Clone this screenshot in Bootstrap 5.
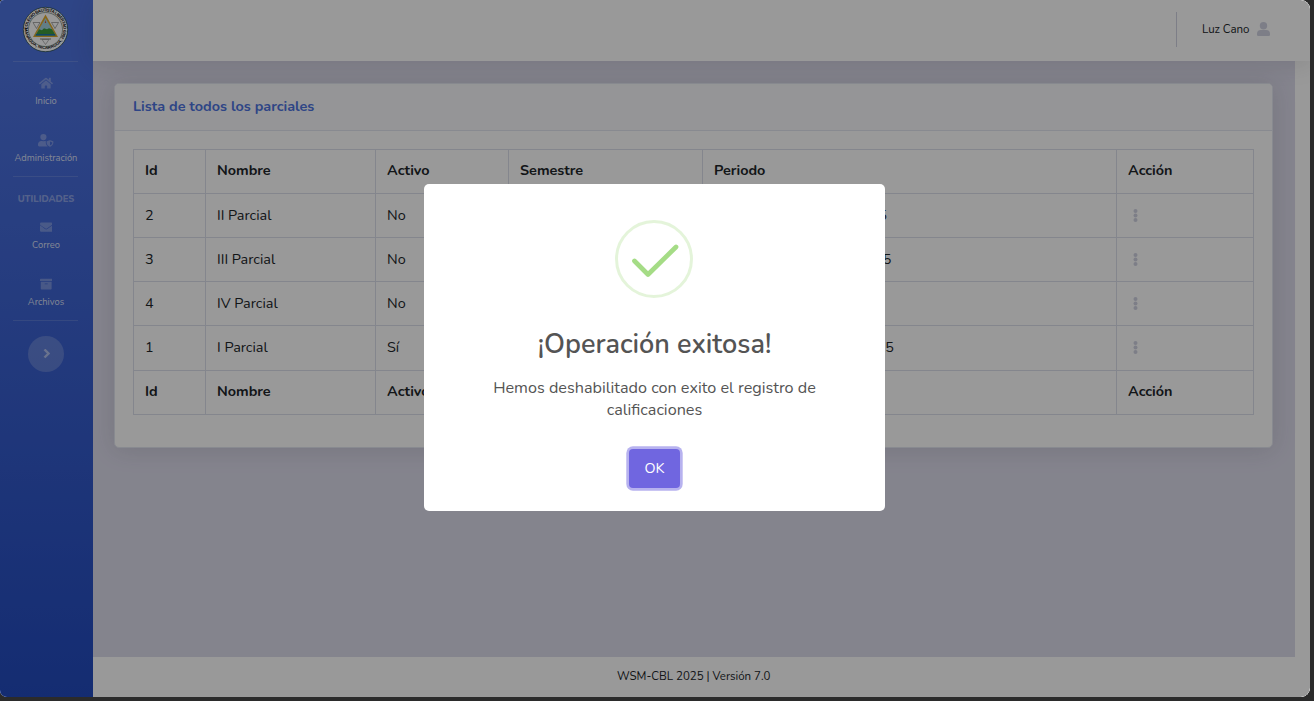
<!DOCTYPE html>
<html lang="es">
<head>
<meta charset="utf-8">
<meta name="viewport" content="width=device-width, initial-scale=1">
<title>Parciales</title>
<link rel="stylesheet" href="https://cdn.jsdelivr.net/npm/bootstrap@5.3.0/dist/css/bootstrap.min.css">
<style>
html{font-size:14.4px}
body{font-family:Nunito,Lato,"Open Sans",sans-serif;font-size:14.4px;background:#2b2b2b;color:#212529;overflow:hidden}
.app-window{width:1310px;height:697px;border-radius:4px 9px 9px 7px;background:#fff}
.side{width:93px;padding-right:2px;background:linear-gradient(180deg,#4e73df 10%,#224abe 100%)}
.side hr{width:65px;margin:0 auto;border:0;border-top:1px solid rgba(255,255,255,.15);opacity:1}
.brand{height:61px;padding-top:6px}
.side-item{height:57.2px;padding:15.3px 0 0 1px;color:rgba(255,255,255,.8);font-size:9.36px;line-height:14px}
.side-item svg{display:block;height:12.4px;fill:rgba(255,255,255,.3);margin:0 auto 4.3px}
.side-title{height:28.6px;padding:15px 0 0 1px;font-size:9.36px;line-height:14px;font-weight:800;color:rgba(255,255,255,.4)}
.toggler{width:36px;height:36px;background:rgba(255,255,255,.2);margin-top:14.5px}
.topbar{height:61px;padding-right:40px;box-shadow:0 2px 25px rgba(58,59,69,.15)}
.topbar .sep{width:1px;height:35px;background:#d1d3e2;margin-top:12px}
.user{font-size:11.5px;line-height:16px;width:93px;padding:21px 0 0 25px}
.user svg{margin-top:1px}
.scroller{width:15px}
.main{background:#dddcec;padding:22px 22px 0 21px}
.panel{border:1px solid #e3e6f0;border-radius:5px;height:365px;box-shadow:0 2px 25px rgba(58,59,69,.15)}
.panel-head{height:47px;background:#f8f9fc;border-bottom:1px solid #e3e6f0;padding:11px 18px;line-height:22px;color:#4e73df;border-radius:4px 4px 0 0}
.panel-body{padding:18px}
.grid-table{table-layout:fixed;width:1121px;border-collapse:collapse;border-color:#dddfeb;line-height:21.6px;margin:0;color:#212529}
.grid-table th,.grid-table td{height:44px;padding:0 11px;vertical-align:middle;border:1px solid #dddfeb}
.grid-table thead th{padding-bottom:1px}
.grid-table tfoot th{padding-bottom:2px}
.grid-table tbody tr:last-child td{height:45px;padding-bottom:1px}
.grid-table svg{display:block;margin-left:5.2px}
.range{display:block;text-align:right;white-space:nowrap}
.foot{height:40px;font-size:11.5px;line-height:38px}
.foot div{width:1201.5px}
.shade{inset:0;background:rgba(0,0,0,.4);border-radius:4px 9px 9px 7px}
.dialog-box{width:461px;height:327px;left:424px;top:184px;border-radius:5px;background:#fff;color:#545454;padding-top:36px}
.tick{display:block;margin-left:191px}
.dialog-box h2{font-size:27px;line-height:32px;font-weight:600;margin:31px 0 16px}
.dialog-box p{font-size:16.2px;line-height:22px;margin:0 0 28px}
.ok{width:51px;height:39px;border:0;border-radius:4px;background:#7066e0;color:#fff;box-shadow:0 0 0 2.7px rgba(112,102,224,.5);font-size:14.4px;line-height:39px;padding:0}
</style>
</head>
<body>
<div class="app-window d-flex position-relative overflow-hidden">
  <aside class="side flex-shrink-0 text-center d-flex flex-column">
    <div class="brand">
      <svg width="47" height="47" viewBox="0 0 47 47">
        <defs><path id="ringTop" d="M5.500 23.500a18 18 0 0 1 36 0"/><path id="ringBottom" d="M2.500 22a21 21 0 0 0 42 0"/></defs>
        <circle cx="23.500" cy="23.500" r="22.200" fill="#fff" stroke="#173c35" stroke-width=".7"/>
        <g font-family="Liberation Sans" font-weight="700" font-size="4.300" fill="#111"><text textLength="56"><textPath href="#ringTop">COLEGIO BAUTISTA LIBERTAD</textPath></text><text textLength="63"><textPath href="#ringBottom">MANAGUA, NICARAGUA, 2000</textPath></text></g>
        <circle cx="23.500" cy="23.500" r="17" fill="#fff" stroke="#2d4a40" stroke-width=".5"/>
        <path d="M11 16.500h7l-3.500 6zM29.500 16.500h7l-3.500 6z" fill="#fff" stroke="#888" stroke-width=".7"/>
        <path d="M23.500 8.500 36 31H11z" fill="#e0a92c"/>
        <path d="M23.500 12 33.700 29.600H13.300z" fill="#a3d3df"/>
        <path d="m15.300 26.300 1.700-3 3 1 2-2 3 1 2-1 3 1 1.800 3 1.900 3.300H13.300z" fill="#3f9a3c"/>
        <path d="M14.300 27.900h18.400l1 1.700H13.300z" fill="#1d75a8"/><path d="M22.800 17h1.400l-.7-3z" fill="#d4493b"/>
        <path d="M20 33.500h7l-3.500 5z" fill="#fff" stroke="#888" stroke-width=".6"/><path d="M18 33h11" stroke="#888"/>
      </svg>
    </div>
    <hr>
    <div class="side-item"><svg viewBox="0 0 576 512"><path d="M280.400 148.300 96 300.100V464a16 16 0 0 0 16 16l112-.3a16 16 0 0 0 16-16V368a16 16 0 0 1 16-16h64a16 16 0 0 1 16 16v95.600a16 16 0 0 0 16 16l112 .3a16 16 0 0 0 16-16V300L295.700 148.300a12.200 12.200 0 0 0-15.300 0zM571.600 251.500 488 182.600V44a12 12 0 0 0-12-12h-56a12 12 0 0 0-12 12v72.600L318.500 43a48 48 0 0 0-61 0L4.300 251.500a12 12 0 0 0-1.600 16.900l25.500 31a12 12 0 0 0 16.900 1.600L280.400 107a12.200 12.200 0 0 1 15.300 0l235.200 194a12 12 0 0 0 16.900-1.600l25.500-31a12 12 0 0 0-1.700-16.900z"/></svg><div>Inicio</div></div>
    <div class="side-item"><svg viewBox="0 0 640 512"><path d="M224 256a128 128 0 1 0 0-256 128 128 0 0 0 0 256zm96 64c0-12 3-22 9-31-26-3-42 0-54 5a174 174 0 0 1-102 0c-18-6-23-6-39-6C60 288 0 348 0 422v42c0 27 21 48 48 48h352c-49-42-80-112-80-192zm302-18-115-43c-8-4-17-4-25 0l-115 43a24 24 0 0 0-15 22c0 127 76 181 130 203 8 4 17 4 25 0 43-18 130-66 130-203a24 24 0 0 0-15-22zM496 462V312l96 36c-6 74-54 104-96 114z"/></svg><div>Administración</div></div>
    <hr>
    <div class="side-title">UTILIDADES</div>
    <div class="side-item"><svg viewBox="0 0 512 512"><path d="M502.300 190.800a6 6 0 0 1 9.700 4.700V400a48 48 0 0 1-48 48H48a48 48 0 0 1-48-48V195.600a6 6 0 0 1 9.700-4.700C32 208 62 230 164 304c21 15 57 48 92 48 35 0 72-33 92-48 102-74 132-96 154.300-113.200zM256 320c23 .4 56-29 73-41 133-96 143-105 173-129a24 24 0 0 0 10-19v-19a48 48 0 0 0-48-48H48a48 48 0 0 0-48 48v19c0 7 3 14 10 19 30 24 40 33 173 129 17 12 50 41 73 41z"/></svg><div>Correo</div></div>
    <div class="side-item"><svg viewBox="0 0 512 512"><path d="M32 448a32 32 0 0 0 32 32h384a32 32 0 0 0 32-32V160H32zm160-212a12 12 0 0 1 12-12h104a12 12 0 0 1 12 12v8a12 12 0 0 1-12 12H204a12 12 0 0 1-12-12zM480 32H32A32 32 0 0 0 0 64v48a16 16 0 0 0 16 16h480a16 16 0 0 0 16-16V64a32 32 0 0 0-32-32z"/></svg><div>Archivos</div></div>
    <hr>
    <div class="toggler rounded-circle mx-auto d-flex align-items-center justify-content-center"><svg width="8" height="10" viewBox="0 0 8 10"><path d="m2.500 .5 4 4-4 4" fill="none" stroke="#fff" stroke-opacity=".5" stroke-width="2.400"/></svg></div>
  </aside>
  <div class="flex-grow-1 d-flex flex-column">
    <header class="topbar bg-white d-flex justify-content-end position-relative">
      <div class="sep"></div>
      <div class="user d-flex"><span class="text-nowrap">Luz Cano</span><svg class="ms-auto flex-shrink-0" width="13" height="14" viewBox="0 0 13 14" fill="#d1d3e2"><circle cx="6.500" cy="3.700" r="3.700"/><path d="M3.800 8h5.400A3.800 3.800 0 0 1 13 11.800v1a1.200 1.200 0 0 1-1.200 1.200H1.200A1.200 1.200 0 0 1 0 12.800v-1A3.800 3.800 0 0 1 3.800 8z"/></svg></div>
    </header>
    <div class="d-flex flex-grow-1">
      <main class="main flex-grow-1">
        <section class="panel bg-white">
          <div class="panel-head fw-bold">Lista de todos los parciales</div>
          <div class="panel-body">
            <table class="grid-table">
              <colgroup><col style="width:72px"><col style="width:170px"><col style="width:133px"><col style="width:194px"><col style="width:414px"><col style="width:137px"></colgroup>
              <thead><tr><th>Id</th><th>Nombre</th><th>Activo</th><th>Semestre</th><th>Periodo</th><th>Acción</th></tr></thead>
              <tbody>
                <tr><td>2</td><td>II Parcial</td><td>No</td><td></td><td><span class="range" style="width:173px">2025</span></td><td><svg width="5" height="13" viewBox="0 0 5 13" fill="#d1d3e2"><circle cx="2.500" cy="2.100" r="2"/><circle cx="2.500" cy="6.500" r="2"/><circle cx="2.500" cy="10.900" r="2"/></svg></td></tr>
                <tr><td>3</td><td>III Parcial</td><td>No</td><td></td><td><span class="range" style="width:177.4px">2025</span></td><td><svg width="5" height="13" viewBox="0 0 5 13" fill="#d1d3e2"><circle cx="2.500" cy="2.100" r="2"/><circle cx="2.500" cy="6.500" r="2"/><circle cx="2.500" cy="10.900" r="2"/></svg></td></tr>
                <tr><td>4</td><td>IV Parcial</td><td>No</td><td></td><td></td><td><svg width="5" height="13" viewBox="0 0 5 13" fill="#d1d3e2"><circle cx="2.500" cy="2.100" r="2"/><circle cx="2.500" cy="6.500" r="2"/><circle cx="2.500" cy="10.900" r="2"/></svg></td></tr>
                <tr><td>1</td><td>I Parcial</td><td>Sí</td><td></td><td><span class="range" style="width:180px">2025</span></td><td><svg width="5" height="13" viewBox="0 0 5 13" fill="#d1d3e2"><circle cx="2.500" cy="2.100" r="2"/><circle cx="2.500" cy="6.500" r="2"/><circle cx="2.500" cy="10.900" r="2"/></svg></td></tr>
              </tbody>
              <tfoot><tr><th>Id</th><th>Nombre</th><th>Activo</th><th></th><th></th><th>Acción</th></tr></tfoot>
            </table>
          </div>
        </section>
      </main>
      <div class="scroller"></div>
    </div>
    <footer class="foot text-center bg-white"><div>WSM-CBL 2025 | Versión 7.0</div></footer>
  </div>
  <div class="shade position-absolute"></div>
  <div class="dialog-box position-absolute text-center" role="dialog">
    <svg class="tick" width="78" height="78" viewBox="0 0 78 78" fill="none"><circle cx="39" cy="39" r="37.500" stroke="#a5dc86" stroke-opacity=".3" stroke-width="3"/><path d="M19.500 41 33 54.500 61 27" stroke="#a5dc86" stroke-width="4.700" stroke-linecap="round" stroke-linejoin="round"/></svg>
    <h2>¡Operación exitosa!</h2>
    <p>Hemos deshabilitado con exito el registro de<br>calificaciones</p>
    <button class="ok" type="button">OK</button>
  </div>
</div>
<script src="https://cdn.jsdelivr.net/npm/bootstrap@5.3.0/dist/js/bootstrap.bundle.min.js"></script>
</body>
</html>
